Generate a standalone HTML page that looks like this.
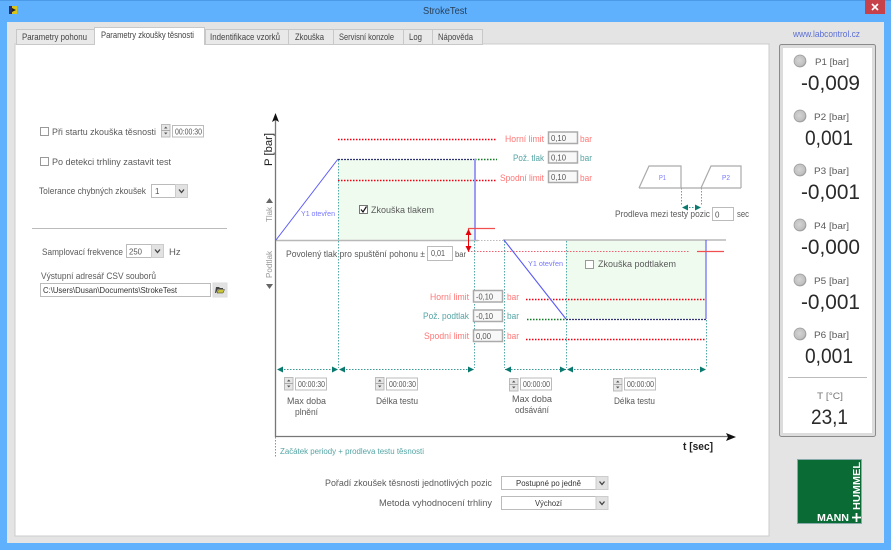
<!DOCTYPE html>
<html><head><meta charset="utf-8"><title>StrokeTest</title>
<style>
html,body{margin:0;padding:0;background:#e4e4e4;width:891px;height:550px;overflow:hidden}
svg{display:block;filter:blur(.3px)}
text{font-family:"Liberation Sans",sans-serif;font-size:9.5px;fill:#5a5a5a;white-space:pre}
.r{fill:#f77}.t{fill:#55a5a5}.b{fill:#77f;font-size:7.5px}
.v{font-size:21.5px;fill:#2a2a2a;text-anchor:middle}.s{font-size:8px;fill:#555}
.d{fill:none;stroke-dasharray:1.5 1.5}
.in{fill:#fff;stroke:#bbb}
.lim{fill:#f8f8f8;stroke:#aaa;stroke-width:1.5}
.c{fill:#fff;stroke:#999}
</style></head><body>
<svg width="891" height="550" viewBox="0 0 891 550" xmlns="http://www.w3.org/2000/svg">
<defs>
<g id="spin"><rect x=".5" y=".5" width="8.5" height="12.5" fill="#e6e6e6" stroke="#bbb"/><path d="M.5 6.5H9" stroke="#aaa"/><path d="M3 4.5L4.8 2.5 6.5 4.5zM3 8.5L4.8 10.5 6.5 8.5z" fill="#555"/></g>
<g id="cbtn"><rect x=".5" y=".5" width="12" height="13" fill="#e2e2e2" stroke="#ccc"/><path d="M4 5.5L6.5 8.5 9 5.5" fill="none" stroke="#444" stroke-width="1.3"/></g>
<path id="al" d="M0 0L6 -3V3z" fill="#0a7a70"/>
<path id="ar" d="M0 0L-6 -3V3z" fill="#0a7a70"/>
<radialGradient id="led" cx=".45" cy=".45" r=".6"><stop offset="0" stop-color="#d4d4d4"/><stop offset=".75" stop-color="#c0c0c0"/><stop offset="1" stop-color="#8a8a8a"/></radialGradient>
<g id="ledg"><circle r="6" fill="url(#led)" stroke="#999" stroke-width=".7"/></g>
</defs>

<!-- window -->
<rect width="891" height="550" fill="#5fb0fd"/>
<rect x="7" y="22" width="877" height="521" fill="#e4e4e4"/>
<rect x="0" y="0" width="891" height="1" fill="#4a9ae8"/>
<rect x="9" y="6" width="8" height="8" fill="#d9c41a"/><path d="M9 6h3v8H9z" fill="#2b2b70"/><path d="M12 8l4 2-4 2z" fill="#222"/>
<text x="423" y="14" textLength="44" lengthAdjust="spacingAndGlyphs" style="font-size:10.5px;fill:#2a3f55">StrokeTest</text>
<rect x="865" y="0" width="20" height="14" fill="#c7414b"/>
<path d="M872 4l6 6M878 4l-6 6" stroke="#fff" stroke-width="1.6"/>

<!-- tabs -->
<rect x="15" y="44" width="754" height="492" fill="#fff" stroke="#ccc"/>
<g fill="#e9e9e9" stroke="#c8c8c8">
<rect x="16.5" y="29.5" width="78" height="15"/>
<rect x="205.5" y="29.5" width="83" height="15"/>
<rect x="288.5" y="29.5" width="45" height="15"/>
<rect x="333.5" y="29.5" width="70" height="15"/>
<rect x="403.5" y="29.5" width="29" height="15"/>
<rect x="432.5" y="29.5" width="50" height="15"/>
</g>
<path d="M94.5 45V27.5H204.5V45" fill="#fff" stroke="#c8c8c8"/>
<rect x="95" y="43" width="109" height="3" fill="#fff"/>
<text x="22" y="40" textLength="65" lengthAdjust="spacingAndGlyphs" style="fill:#444">Parametry pohonu</text>
<text x="101" y="38" textLength="93" lengthAdjust="spacingAndGlyphs" style="fill:#444">Parametry zkoušky těsnosti</text>
<text x="210" y="40" textLength="70" lengthAdjust="spacingAndGlyphs" style="fill:#444">Indentifikace vzorků</text>
<text x="295" y="40" textLength="29" lengthAdjust="spacingAndGlyphs" style="fill:#444">Zkouška</text>
<text x="339" y="40" textLength="55" lengthAdjust="spacingAndGlyphs" style="fill:#444">Servisní konzole</text>
<text x="409" y="40" textLength="13" lengthAdjust="spacingAndGlyphs" style="fill:#444">Log</text>
<text x="438" y="40" textLength="35" lengthAdjust="spacingAndGlyphs" style="fill:#444">Nápověda</text>

<!-- left controls -->
<rect x="40.5" y="127.5" width="8" height="8" class="c"/>
<text x="52" y="135" textLength="104" lengthAdjust="spacingAndGlyphs">Při startu zkouška těsnosti</text>
<use href="#spin" x="161" y="124"/>
<rect x="172.5" y="125.5" width="31" height="11.5" class="in"/>
<text x="175" y="134.5" textLength="27" lengthAdjust="spacingAndGlyphs" class="s">00:00:30</text>
<rect x="40.5" y="157.5" width="8" height="8" class="c"/>
<text x="52" y="165" textLength="119" lengthAdjust="spacingAndGlyphs">Po detekci trhliny zastavit test</text>
<text x="39" y="194" textLength="107" lengthAdjust="spacingAndGlyphs">Tolerance chybných zkoušek</text>
<rect x="151.5" y="184.5" width="36" height="13" class="in"/>
<use href="#cbtn" x="175" y="184"/>
<text x="155" y="194" class="s">1</text>
<path d="M32 228.5H227" stroke="#bbb"/>
<text x="42" y="255" textLength="81" lengthAdjust="spacingAndGlyphs">Samplovací frekvence</text>
<rect x="126.5" y="244.5" width="37" height="13" class="in"/>
<use href="#cbtn" x="151" y="244"/>
<text x="129" y="254.5" textLength="13" lengthAdjust="spacingAndGlyphs" class="s">250</text>
<text x="169" y="255">Hz</text>
<text x="41" y="279" textLength="115" lengthAdjust="spacingAndGlyphs">Výstupní adresář CSV souborů</text>
<rect x="40.5" y="283.5" width="170" height="13" class="in"/>
<text x="43" y="293" textLength="134" lengthAdjust="spacingAndGlyphs" class="s" style="fill:#333">C:\Users\Dusan\Documents\StrokeTest</text>
<rect x="213" y="283" width="14" height="14" fill="#e2e2e2" stroke="#ddd"/>
<path d="M216 287h3l1 1h3v1h-5l-2 4h-1z" fill="#444"/><path d="M217 293l1.5-3.5h6l-1.500 3.500z" fill="#c9c63a" stroke="#333" stroke-width=".5"/>

<!-- graph fills -->
<rect x="338" y="159" width="137" height="81" fill="#f0fbf0"/>
<rect x="566" y="240" width="140" height="79" fill="#f0fbf0"/>

<!-- dotted limits -->
<g class="d" stroke-width="1.6">
<path d="M338 139.5H497M338 180.5H497M526 299.5H706M526 339.5H706" stroke="#f00010"/>
<path d="M475 159.5H497M527 319.5H566" stroke="#0f7a20"/>
</g>
<path d="M468 251.5H690" class="d" stroke="#f06070"/>

<!-- axes -->
<path d="M276 240.5H478" stroke="#b8b8b8" stroke-width="1.5"/>
<path d="M478 240.5H503" stroke="#bbb" class="d"/>
<path d="M503 240H726" stroke="#b8b8b8" stroke-width="1.5"/>
<path d="M275.5 118V436.500H730" fill="none" stroke="#777" stroke-width="1.3"/>
<path d="M275.5 113L279 122 275.5 120 272 122z" fill="#111"/>
<path d="M736 437L726 441 728 437 726 433z" fill="#111"/>

<!-- vertical teal dotted -->
<g class="d" stroke="#55aaaa">
<path d="M338.5 160V368M474.5 241V368M504.5 241V368M566.5 241V368M706.5 320V368M275.5 437V458"/>
<path d="M681.5 188V206M701.5 188V206"/>
</g>

<!-- pressure lines -->
<path d="M276 240L338 159" fill="none" stroke="#5a5af5" stroke-width="1"/>
<path d="M338 159.5H475" stroke="#33337a" stroke-width="1.2" stroke-dasharray="2 1"/>
<path d="M475 159V240" stroke="#9c9cf5" stroke-width="2"/>
<path d="M504 240L566 319M706 319V240" fill="none" stroke="#5a5af5" stroke-width="1.1"/>
<path d="M566 319.5H706" stroke="#33337a" stroke-width="1.2" stroke-dasharray="2 1"/>

<!-- red tolerance -->
<path d="M468.5 232V228.5H495" fill="none" stroke="#f05050" stroke-width="1.2"/>
<path d="M468.5 232V248" stroke="#e00"/>
<path d="M468.5 229L471.5 235H465.5zM468.5 252L471.5 246H465.5z" fill="#e8000a"/>
<path d="M697 251.5H724" stroke="#f05050" stroke-width="1.2"/>

<!-- teal arrows -->
<path class="d" stroke="#3a9a95" d="M278 369.5H338M340 369.5H474M505 369.5H566M568 369.5H706M683 207.5H700"/>
<use href="#al" x="277" y="369.5"/><use href="#ar" x="338" y="369.5"/>
<use href="#al" x="339" y="369.5"/><use href="#ar" x="474" y="369.5"/>
<use href="#al" x="505" y="369.5"/><use href="#ar" x="566" y="369.5"/>
<use href="#al" x="567" y="369.5"/><use href="#ar" x="706" y="369.5"/>
<use href="#al" x="682" y="207.5"/><use href="#ar" x="701" y="207.5"/>

<!-- axis labels -->
<text transform="translate(272,166) rotate(-90)" textLength="33" lengthAdjust="spacingAndGlyphs" style="font-size:11px;fill:#222">P [bar]</text>
<text x="683" y="450" textLength="30" lengthAdjust="spacingAndGlyphs" style="font-size:11px;fill:#222;font-weight:bold">t [sec]</text>
<text transform="translate(272,222) rotate(-90)" textLength="15" lengthAdjust="spacingAndGlyphs" style="font-size:8px;fill:#999">Tlak</text>
<path d="M269.5 198L273 203H266z" fill="#666"/>
<text transform="translate(272,278) rotate(-90)" textLength="27" lengthAdjust="spacingAndGlyphs" style="font-size:8px;fill:#999">Podtlak</text>
<path d="M269.5 289L273 284H266z" fill="#666"/>

<!-- labels upper -->
<text x="505" y="142" textLength="39" lengthAdjust="spacingAndGlyphs" class="r">Horní limit</text>
<text x="513" y="161" textLength="31" lengthAdjust="spacingAndGlyphs" class="t">Pož. tlak</text>
<text x="500" y="181" textLength="44" lengthAdjust="spacingAndGlyphs" class="r">Spodní limit</text>
<rect x="548.5" y="132" width="29" height="11.5" class="lim"/>
<rect x="548.5" y="151.5" width="29" height="11.5" class="lim"/>
<rect x="548.5" y="171" width="29" height="11.5" class="lim"/>
<text x="551" y="141" class="s" textLength="15" lengthAdjust="spacingAndGlyphs">0,10</text>
<text x="551" y="160.5" class="s" textLength="15" lengthAdjust="spacingAndGlyphs">0,10</text>
<text x="551" y="180" class="s" textLength="15" lengthAdjust="spacingAndGlyphs">0,10</text>
<text x="580" y="142" class="r" textLength="12" lengthAdjust="spacingAndGlyphs">bar</text>
<text x="580" y="161" class="t" textLength="12" lengthAdjust="spacingAndGlyphs">bar</text>
<text x="580" y="181" class="r" textLength="12" lengthAdjust="spacingAndGlyphs">bar</text>

<rect x="359.5" y="205.5" width="8" height="8" fill="#fff" stroke="#777"/>
<path d="M361 209.5L363 212 366.5 206.5" fill="none" stroke="#111" stroke-width="1.2"/>
<text x="371" y="213" textLength="63" lengthAdjust="spacingAndGlyphs">Zkouška tlakem</text>
<text x="301" y="216" textLength="34" lengthAdjust="spacingAndGlyphs" class="b">Y1 otevřen</text>
<text x="528" y="266" textLength="35" lengthAdjust="spacingAndGlyphs" class="b">Y1 otevřen</text>
<rect x="585.5" y="260.5" width="8" height="8" class="c"/>
<text x="598" y="267" textLength="78" lengthAdjust="spacingAndGlyphs">Zkouška podtlakem</text>

<text x="286" y="257" textLength="139" lengthAdjust="spacingAndGlyphs">Povolený tlak pro spuštění pohonu ±</text>
<rect x="427.5" y="246.5" width="25" height="14" class="in"/>
<text x="431" y="256" class="s" textLength="14" lengthAdjust="spacingAndGlyphs">0,01</text>
<text x="455" y="257" textLength="11" lengthAdjust="spacingAndGlyphs" class="s">bar</text>

<!-- P1 P2 -->
<path d="M639 188L649 166H681V188M701 188L711 166H741V188M639 188H741" fill="none" stroke="#aaa" stroke-width="1.2"/>
<text x="659" y="180" class="b" textLength="7" lengthAdjust="spacingAndGlyphs">P1</text>
<text x="722" y="180" class="b" textLength="8" lengthAdjust="spacingAndGlyphs">P2</text>
<text x="615" y="217" textLength="95" lengthAdjust="spacingAndGlyphs">Prodleva mezi testy pozic</text>
<rect x="712.5" y="207.5" width="21" height="13" class="in"/>
<text x="715" y="217.5" class="s">0</text>
<text x="737" y="217" textLength="12" lengthAdjust="spacingAndGlyphs">sec</text>

<!-- lower limits -->
<text x="430" y="300" textLength="39" lengthAdjust="spacingAndGlyphs" class="r">Horní limit</text>
<text x="423" y="319" textLength="46" lengthAdjust="spacingAndGlyphs" class="t">Pož. podtlak</text>
<text x="424" y="339" textLength="45" lengthAdjust="spacingAndGlyphs" class="r">Spodní limit</text>
<rect x="473.5" y="290.5" width="29" height="11.5" class="lim"/>
<rect x="473.5" y="310" width="29" height="11.5" class="lim"/>
<rect x="473.5" y="330" width="29" height="11.5" class="lim"/>
<text x="476" y="299.5" class="s" textLength="17" lengthAdjust="spacingAndGlyphs">-0,10</text>
<text x="476" y="319" class="s" textLength="17" lengthAdjust="spacingAndGlyphs">-0,10</text>
<text x="476" y="339" class="s" textLength="15" lengthAdjust="spacingAndGlyphs">0,00</text>
<text x="507" y="300" class="r" textLength="12" lengthAdjust="spacingAndGlyphs">bar</text>
<text x="507" y="319" class="t" textLength="12" lengthAdjust="spacingAndGlyphs">bar</text>
<text x="507" y="339" class="r" textLength="12" lengthAdjust="spacingAndGlyphs">bar</text>

<!-- timers -->
<use href="#spin" x="284" y="377"/><rect x="295.5" y="378" width="31" height="12" class="in"/>
<text x="298" y="387" class="s" textLength="27" lengthAdjust="spacingAndGlyphs">00:00:30</text>
<use href="#spin" x="375" y="377"/><rect x="386.5" y="378" width="31" height="12" class="in"/>
<text x="389" y="387" class="s" textLength="27" lengthAdjust="spacingAndGlyphs">00:00:30</text>
<use href="#spin" x="509" y="378"/><rect x="520.5" y="378" width="31" height="12" class="in"/>
<text x="523" y="387" class="s" textLength="27" lengthAdjust="spacingAndGlyphs">00:00:00</text>
<use href="#spin" x="613" y="378"/><rect x="624.5" y="378" width="31" height="12" class="in"/>
<text x="627" y="387" class="s" textLength="27" lengthAdjust="spacingAndGlyphs">00:00:00</text>

<text x="287" y="404" textLength="39" lengthAdjust="spacingAndGlyphs">Max doba</text>
<text x="295" y="415" textLength="23" lengthAdjust="spacingAndGlyphs">plnění</text>
<text x="376" y="404" textLength="42" lengthAdjust="spacingAndGlyphs">Délka testu</text>
<text x="512" y="402" textLength="40" lengthAdjust="spacingAndGlyphs">Max doba</text>
<text x="515" y="413" textLength="34" lengthAdjust="spacingAndGlyphs">odsávání</text>
<text x="614" y="404" textLength="41" lengthAdjust="spacingAndGlyphs">Délka testu</text>

<text x="280" y="454" textLength="144" lengthAdjust="spacingAndGlyphs" class="t" style="font-size:8px">Začátek periody + prodleva testu těsnosti</text>

<!-- bottom combos -->
<text x="325" y="486" textLength="167" lengthAdjust="spacingAndGlyphs">Pořadí zkoušek těsnosti jednotlivých pozic</text>
<text x="379" y="506" textLength="113" lengthAdjust="spacingAndGlyphs">Metoda vyhodnocení trhliny</text>
<rect x="501.5" y="476.5" width="106" height="13" class="in"/><use href="#cbtn" x="595.5" y="476"/>
<rect x="501.5" y="496.5" width="106" height="13" class="in"/><use href="#cbtn" x="595.5" y="496"/>
<text x="516" y="486" textLength="65" lengthAdjust="spacingAndGlyphs" class="s" style="fill:#333">Postupné po jedně</text>
<text x="535" y="506" textLength="27" lengthAdjust="spacingAndGlyphs" class="s" style="fill:#333">Výchozí</text>

<!-- right panel -->
<text x="793" y="37" textLength="67" lengthAdjust="spacingAndGlyphs" style="fill:#5b6fd6">www.labcontrol.cz</text>
<rect x="779.5" y="44.5" width="96" height="392" rx="2" fill="#dcdcdc" stroke="#8a8a8a"/>
<rect x="783" y="48" width="89" height="385" fill="#fff"/>
<use href="#ledg" x="800" y="61"/><text x="815" y="65" textLength="34" lengthAdjust="spacingAndGlyphs">P1 [bar]</text><text x="830.5" y="90" class="v" textLength="59" lengthAdjust="spacingAndGlyphs">-0,009</text>
<use href="#ledg" x="800" y="116"/><text x="814" y="120" textLength="35" lengthAdjust="spacingAndGlyphs">P2 [bar]</text><text x="829" y="145" class="v" textLength="48" lengthAdjust="spacingAndGlyphs">0,001</text>
<use href="#ledg" x="800" y="170"/><text x="814" y="174" textLength="35" lengthAdjust="spacingAndGlyphs">P3 [bar]</text><text x="830.5" y="199" class="v" textLength="59" lengthAdjust="spacingAndGlyphs">-0,001</text>
<use href="#ledg" x="800" y="225"/><text x="814" y="229" textLength="35" lengthAdjust="spacingAndGlyphs">P4 [bar]</text><text x="830.5" y="254" class="v" textLength="59" lengthAdjust="spacingAndGlyphs">-0,000</text>
<use href="#ledg" x="800" y="280"/><text x="814" y="284" textLength="35" lengthAdjust="spacingAndGlyphs">P5 [bar]</text><text x="830.5" y="309" class="v" textLength="59" lengthAdjust="spacingAndGlyphs">-0,001</text>
<use href="#ledg" x="800" y="334"/><text x="814" y="338" textLength="35" lengthAdjust="spacingAndGlyphs">P6 [bar]</text><text x="829" y="363" class="v" textLength="48" lengthAdjust="spacingAndGlyphs">0,001</text>
<path d="M788 377.5H867" stroke="#bbb"/>
<text x="817" y="399" textLength="26" lengthAdjust="spacingAndGlyphs" style="fill:#777">T [°C]</text>
<text x="829.5" y="424" class="v" textLength="37" lengthAdjust="spacingAndGlyphs">23,1</text>

<!-- logo -->
<rect x="797.5" y="459.5" width="64" height="64" fill="#0a6b35" stroke="#8aa"/>
<text x="817" y="521" textLength="32" lengthAdjust="spacingAndGlyphs" style="font-size:10px;font-weight:bold;fill:#fff">MANN</text>
<text transform="translate(860,510) rotate(-90)" textLength="48" lengthAdjust="spacingAndGlyphs" style="font-size:10.5px;font-weight:bold;fill:#fff">HUMMEL</text>
<path d="M852 517.5H861M856.5 513V522" stroke="#fff" stroke-width="1.8"/>
</svg>
</body></html>
